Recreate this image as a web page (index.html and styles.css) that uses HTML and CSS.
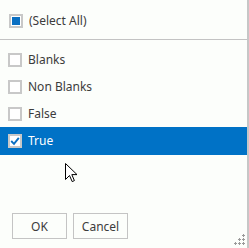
FILE: index.html
```html
<!DOCTYPE html>
<html>
<head>
<meta charset="utf-8">
<link rel="stylesheet" href="styles.css">
</head>
<body>
<div class="panel">
  <div class="select-all">
    <span class="box indeterminate"><span class="fill"></span></span>
    <span class="label">(Select All)</span>
  </div>
  <div class="sep"></div>
  <div class="list">
    <div class="row"><span class="box"></span><span class="label">Blanks</span></div>
    <div class="row"><span class="box"></span><span class="label">Non Blanks</span></div>
    <div class="row"><span class="box"></span><span class="label">False</span></div>
    <div class="row selected"><span class="box checked"><svg width="10" height="10" viewBox="0 0 10 10"><path d="M1.2 5 L4 7.8 L8.8 1.8" fill="none" stroke="#0a6fc2" stroke-width="1.9"/></svg></span><span class="label">True</span></div>
  </div>
  <div class="footer">
    <button class="btn">OK</button>
    <button class="btn">Cancel</button>
  </div>
  <div class="grip">
    <i style="left:8px;top:0"></i>
    <i style="left:4px;top:4px"></i><i style="left:8px;top:4px"></i>
    <i style="left:0;top:8px"></i><i style="left:4px;top:8px"></i><i style="left:8px;top:8px"></i>
  </div>
  <svg class="cursor" width="13" height="20" viewBox="0 0 13 20"><path d="M0.5 0.5 L0.5 16.5 L4.5 12.5 L7.2 18.6 L9.4 17.6 L6.8 11.6 L12 11.6 Z" fill="#fff" stroke="#000" stroke-width="1"/></svg>
</div>
</body>
</html>
```

FILE: styles.css
```css
html, body {
  margin: 0;
  padding: 0;
  background: #fcfefb;
}
.panel {
  position: relative;
  width: 249px;
  height: 248px;
  box-sizing: border-box;
  border-right: 2px solid #c6c6c6;
  font-family: "Noto Sans", "Open Sans", sans-serif;
  font-size: 12px;
  color: #3c3c3c;
  display: flex;
  flex-direction: column;
}
.select-all {
  height: 39px;
  display: flex;
  align-items: center;
  padding-left: 9px;
  padding-top: 2px;
  box-sizing: border-box;
}
.sep {
  height: 1px;
  background: #c3c3c3;
}
.list {
  padding-top: 6px;
  display: flex;
  flex-direction: column;
}
.row {
  height: 27px;
  display: flex;
  align-items: center;
  padding-left: 8px;
}
.row.selected {
  background: #0072c6;
  color: #fff;
  height: 28px;
}
.box {
  width: 14px;
  height: 14px;
  box-sizing: border-box;
  border: 2px solid #c8c8c8;
  background: #fff;
  margin-right: 6px;
  display: flex;
  align-items: center;
  justify-content: center;
  flex: none;
}
.fill {
  width: 8px;
  height: 8px;
  background: #0a6fc2;
}
.checked svg {
  display: block;
}
.label {
  line-height: 16px;
}
.footer {
  margin-top: auto;
  padding: 0 0 9px 12px;
  display: flex;
  gap: 6px;
}
.btn {
  width: 55px;
  height: 26px;
  box-sizing: border-box;
  border: 1px solid #c4c4c4;
  background: #fcfefb;
  font-family: "Noto Sans", "Open Sans", sans-serif;
  font-size: 12px;
  color: #3c3c3c;
  padding: 0;
}
.grip {
  position: absolute;
  right: 2px;
  bottom: 3px;
  width: 11px;
  height: 11px;
}
.grip i {
  position: absolute;
  width: 3px;
  height: 3px;
  background:
    linear-gradient(#9a9a9a, #9a9a9a) center / 3px 1px no-repeat,
    linear-gradient(#9a9a9a, #9a9a9a) center / 1px 3px no-repeat;
}
.cursor {
  position: absolute;
  left: 65px;
  top: 163px;
}
```
